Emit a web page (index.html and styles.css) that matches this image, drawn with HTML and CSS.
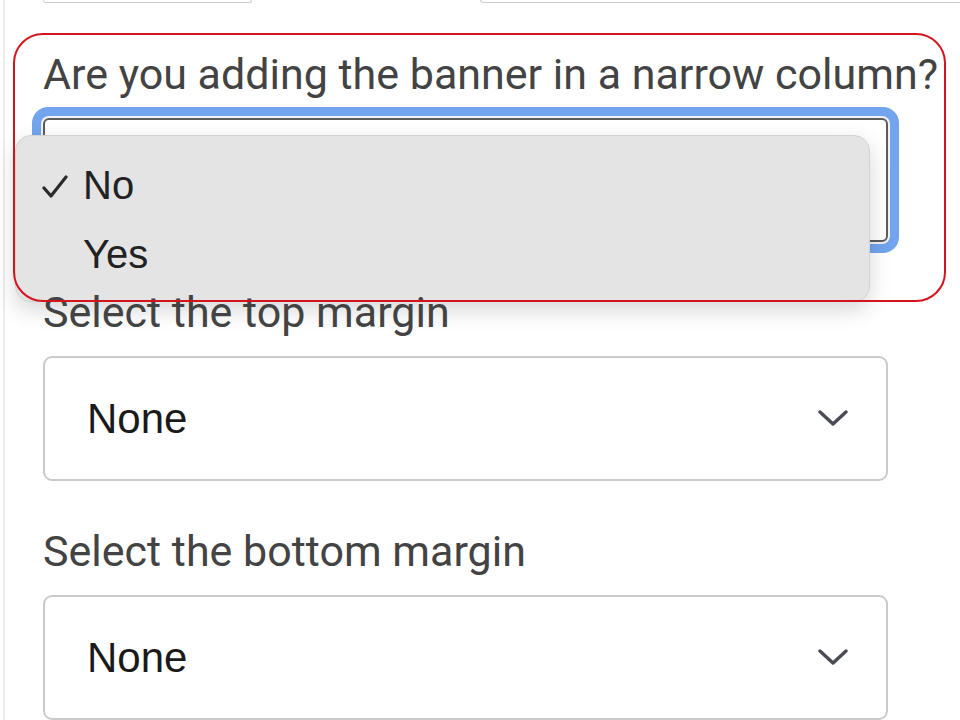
FILE: index.html
```html
<!DOCTYPE html>
<html lang="en">
<head>
  <meta charset="UTF-8">
  <title>Banner settings</title>
  <link rel="stylesheet" href="styles.css">
</head>
<body>

  <div class="panel">
    <!-- bottom of the previous row of inputs -->
    <div class="prev-row">
      <div class="stub stub-small"></div>
      <div class="stub stub-wide"></div>
    </div>

    <div class="field field-open">
      <div class="callout"></div>
      <label class="label">Are you adding the banner in a narrow column?</label>
      <div class="select is-focused"></div>

      <ul class="menu">
        <li class="menu-item checked">
          <svg class="check" width="26" height="24" viewBox="0 0 26 24">
            <polyline points="2,13 9,21 24,2" fill="none" stroke="#2a2a2a" stroke-width="3.2" stroke-linecap="round" stroke-linejoin="round"/>
          </svg>
          No
        </li>
        <li class="menu-item">Yes</li>
      </ul>
    </div>

    <div class="field">
      <label class="label">Select the top margin</label>
      <div class="select">
        <span class="value">None</span>
        <svg class="chevron" width="30" height="17" viewBox="0 0 30 17">
          <polyline points="2,2 15,14 28,2" fill="none" stroke="#4a4b55" stroke-width="3.4" stroke-linecap="round" stroke-linejoin="round"/>
        </svg>
      </div>
    </div>

    <div class="field">
      <label class="label">Select the bottom margin</label>
      <div class="select">
        <span class="value">None</span>
        <svg class="chevron" width="30" height="17" viewBox="0 0 30 17">
          <polyline points="2,2 15,14 28,2" fill="none" stroke="#4a4b55" stroke-width="3.4" stroke-linecap="round" stroke-linejoin="round"/>
        </svg>
      </div>
    </div>
  </div>

</body>
</html>
```

FILE: styles.css
```css
body {
  margin: 0;
  background-color: #ffffff;
  font-family: Roboto, "Noto Sans", sans-serif;
  overflow: hidden;
}

.panel {
  margin-left: 3px;
  padding-left: 38px;
  min-height: 720px;
  border-left: 2px solid #ececec;
}

.prev-row {
  display: flex;
  gap: 228px;
}

.stub {
  height: 2px;
  border: 1px solid #cfcfcf;
  border-top: none;
  border-radius: 0 0 4px 4px;
}

.stub-small {
  width: 207px;
}

.stub-wide {
  flex: 1;
  margin-right: -20px;
}

.field {
  position: relative;
  width: 845px;
  margin-top: 46px;
}

.field + .field {
  margin-top: 45px;
}

.label {
  display: block;
  margin-bottom: 19px;
  font-size: 43px;
  line-height: 50px;
  color: #434343;
  white-space: nowrap;
}

.select {
  box-sizing: border-box;
  height: 125px;
  display: flex;
  align-items: center;
  justify-content: space-between;
  padding: 0 38px 0 42px;
  border: 2px solid #cacaca;
  border-radius: 9px;
  background-color: #ffffff;
}

.select.is-focused {
  height: 124px;
  border-color: #5c5c5c;
  border-radius: 6px;
  box-shadow: 0 0 0 2px #f2f2f2, 0 0 0 11px #72a5ee;
}

.value {
  font-family: "Liberation Sans", Arial, sans-serif;
  font-size: 42px;
  color: #1a1a1a;
}

.chevron {
  display: block;
}

/* native popup list of the open select */
.menu {
  position: absolute;
  left: -28px;
  top: 86px;
  width: 855px;
  box-sizing: border-box;
  margin: 0;
  padding: 15px 0 12px 0;
  list-style: none;
  background-color: #e4e4e4;
  border: 1px solid #d3d3d3;
  border-radius: 16px;
  box-shadow: 0 8px 22px rgba(0, 0, 0, 0.16);
}

.menu-item {
  position: relative;
  padding-left: 67px;
  font-family: "Liberation Sans", Arial, sans-serif;
  font-size: 40px;
  line-height: 69px;
  color: #222222;
}

.check {
  position: absolute;
  left: 26px;
  top: 24px;
}

/* red highlight drawn round the open field */
.callout {
  position: absolute;
  left: -30px;
  top: -16px;
  width: 933px;
  height: 269px;
  box-sizing: border-box;
  border: 2px solid #d3141d;
  border-radius: 30px;
  z-index: 2;
  pointer-events: none;
}
```
